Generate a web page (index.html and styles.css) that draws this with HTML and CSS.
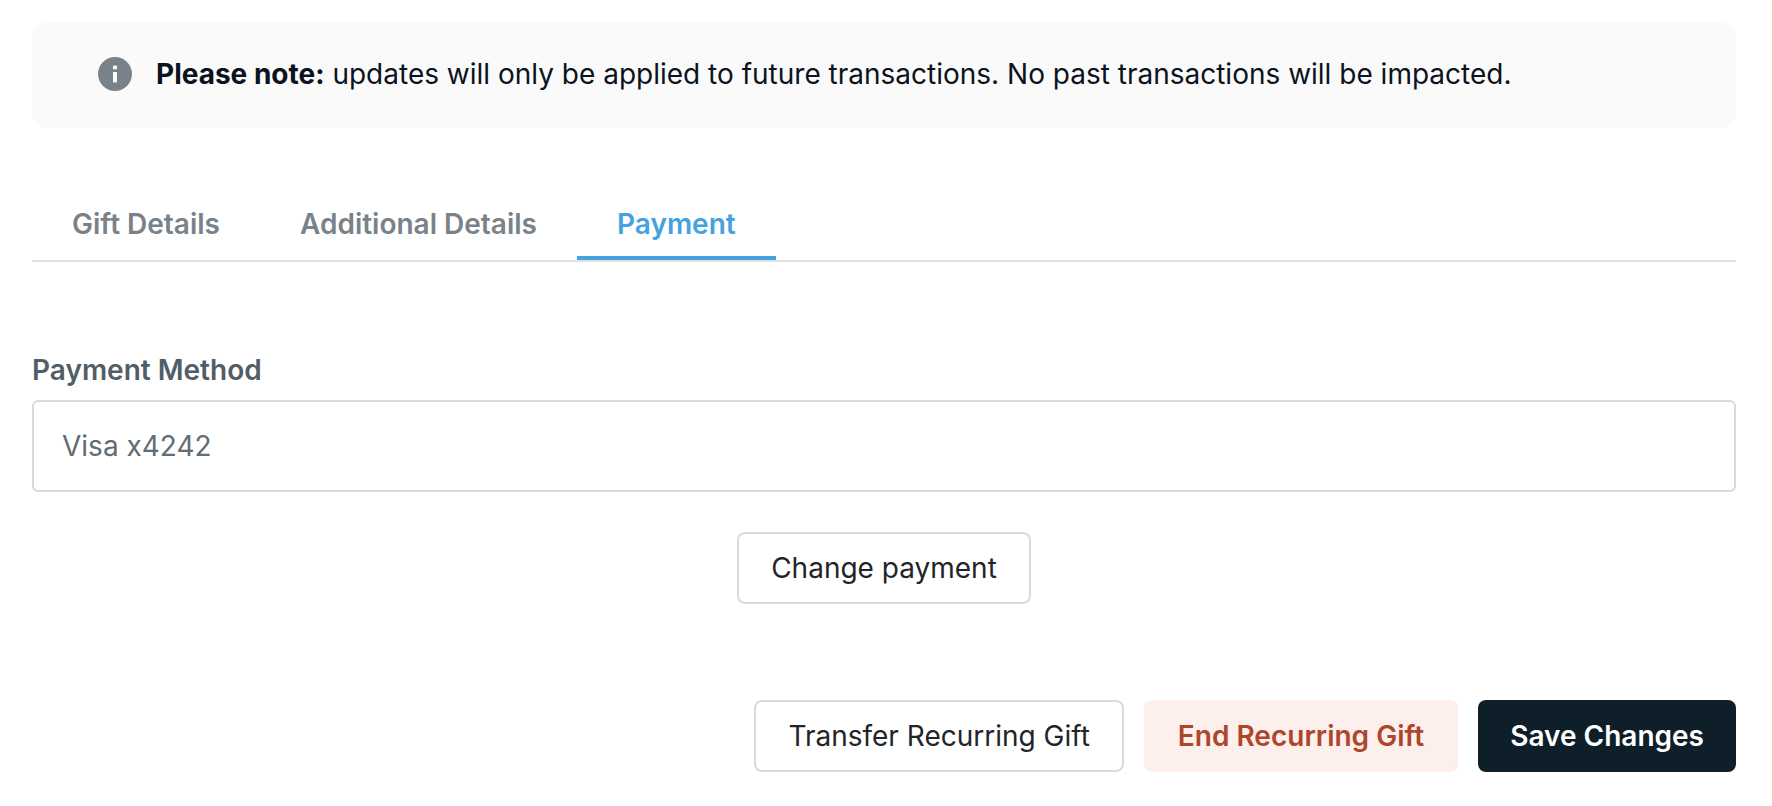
FILE: index.html
```html
<!DOCTYPE html>
<html lang="en">
<head>
  <meta charset="UTF-8" />
  <title>Edit Recurring Gift</title>
  <link rel="stylesheet" href="styles.css">
</head>
<body>

  <div class="notice">
    <svg class="notice-icon" viewBox="0 0 34 34" aria-hidden="true">
      <circle cx="17" cy="17" r="17" fill="#7a8289" />
      <rect x="15" y="8.7" width="4" height="3.6" fill="#fafafa" />
      <rect x="15" y="15" width="4" height="10.4" fill="#fafafa" />
    </svg>
    <p><strong>Please note:</strong> updates will only be applied to future transactions. No past transactions will be impacted.</p>
  </div>

  <nav class="tabs">
    <a class="tab" href="#details">Gift Details</a>
    <a class="tab" href="#additional">Additional Details</a>
    <a class="tab active" href="#payment">Payment</a>
  </nav>

  <form class="payment" id="payment">
    <label for="method">Payment Method</label>
    <input type="text" id="method" value="Visa x4242" readonly />
    <button type="button" class="btn change">Change payment</button>

    <div class="actions">
      <button type="button" class="btn">Transfer Recurring Gift</button>
      <button type="button" class="btn btn-danger">End Recurring Gift</button>
      <button type="submit" class="btn btn-primary">Save Changes</button>
    </div>
  </form>

</body>
</html>
```

FILE: styles.css
```css
* {
  box-sizing: border-box;
}

body {
  margin: 0;
  padding: 22px 36px 34px 32px;
  background: #fff;
  color: #0b1320;
  font-family: Inter, "Liberation Sans", sans-serif;
  font-size: 28px;
  line-height: 40px;
}

.notice {
  display: flex;
  align-items: center;
  gap: 24px;
  padding: 32px 66px 34px;
  border-radius: 16px;
  background: #fafafa;
}

.notice p {
  margin: 0;
}

.notice-icon {
  width: 34px;
  height: 34px;
  flex-shrink: 0;
}

.tabs {
  display: flex;
  margin-top: 72px;
  border-bottom: 2px solid #e0e0e0;
}

.tab {
  padding: 4px 40px 12px;
  border-bottom: 4px solid transparent;
  color: #7a8289;
  font-weight: 600;
  text-decoration: none;
}

.tab.active {
  border-color: #46a2df;
  color: #46a2df;
}

.payment {
  display: flex;
  flex-direction: column;
  margin-top: 88px;
}

.payment label {
  margin-bottom: 10px;
  color: #525e67;
  font-weight: 600;
}

.payment input {
  width: 100%;
  padding: 24px 28px;
  border: 2px solid #d9d9d9;
  border-radius: 6px;
  background: #fff;
  color: #616c75;
  font: inherit;
}

.btn {
  padding: 14px 32px;
  border: 2px solid #d9dada;
  border-radius: 8px;
  background: #fff;
  color: #212529;
  font: inherit;
  cursor: pointer;
}

.change {
  align-self: center;
  margin-top: 40px;
}

.actions {
  display: flex;
  justify-content: flex-end;
  gap: 20px;
  margin-top: 96px;
}

.btn-danger {
  border-color: #fdefec;
  background: #fdefec;
  color: #ad462a;
  font-weight: 600;
}

.btn-primary {
  padding: 16px 32px;
  border: none;
  background: #0e1f2a;
  color: #fff;
  font-weight: 600;
}
```
